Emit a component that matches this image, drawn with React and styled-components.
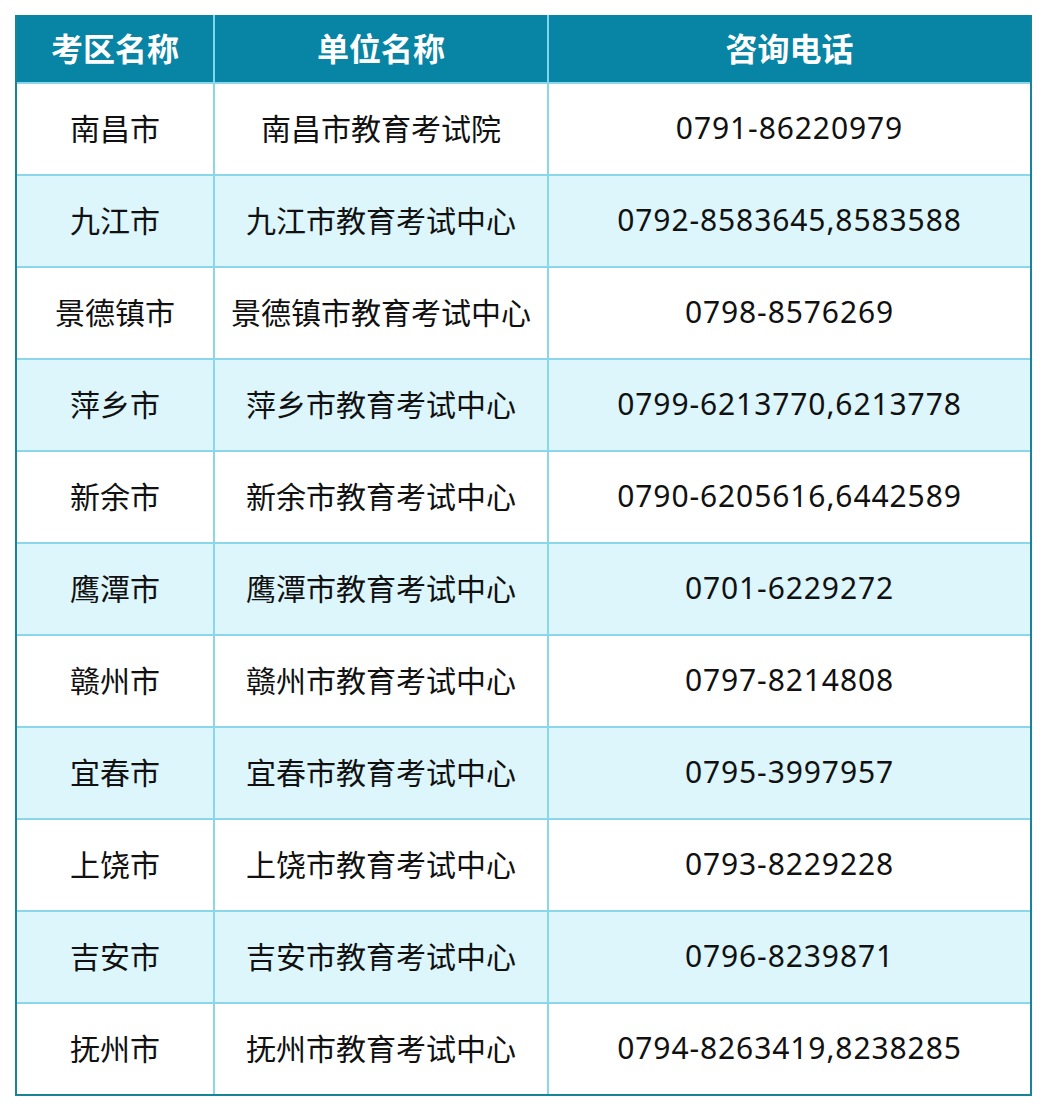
import styled, { createGlobalStyle } from 'styled-components'

const GlobalStyle = createGlobalStyle`
    body {
        margin: 0;
        background: #ffffff;
        font-family: "Noto Sans", "Noto Sans CJK SC", sans-serif;
    }
`

const rows = [
    ['南昌市', '南昌市教育考试院', '0791-86220979'],
    ['九江市', '九江市教育考试中心', '0792-8583645,8583588'],
    ['景德镇市', '景德镇市教育考试中心', '0798-8576269'],
    ['萍乡市', '萍乡市教育考试中心', '0799-6213770,6213778'],
    ['新余市', '新余市教育考试中心', '0790-6205616,6442589'],
    ['鹰潭市', '鹰潭市教育考试中心', '0701-6229272'],
    ['赣州市', '赣州市教育考试中心', '0797-8214808'],
    ['宜春市', '宜春市教育考试中心', '0795-3997957'],
    ['上饶市', '上饶市教育考试中心', '0793-8229228'],
    ['吉安市', '吉安市教育考试中心', '0796-8239871'],
    ['抚州市', '抚州市教育考试中心', '0794-8263419,8238285'],
]

function App() {
    return (
        <Page>
            <GlobalStyle />
            <Table>
                <HeadCell>考区名称</HeadCell>
                <HeadCell>单位名称</HeadCell>
                <HeadCell $last>咨询电话</HeadCell>
                {rows.map((row, i) => {
                    const isLast = i === rows.length - 1
                    const striped = i % 2 === 1
                    return row.map((text, j) => (
                        <Cell
                            key={i + '-' + j}
                            $striped={striped}
                            $lastCol={j === 2}
                            $lastRow={isLast}
                            $phone={j === 2}
                        >{text}</Cell>
                    ))
                })}
            </Table>
        </Page>
    )
}

const Page = styled.div`
    padding: 15px 0 0 15px;
`

const Table = styled.div`
    width: 1017px;
    box-sizing: border-box;
    display: grid;
    grid-template-columns: 198px 334px 481px;
    border-left: 2px solid #1a8497;
    border-right: 2px solid #1a8497;
    border-bottom: 2px solid #1a8497;
`

const HeadCell = styled.div`
    height: 69px;
    box-sizing: border-box;
    padding-bottom: 4px;
    display: flex;
    align-items: center;
    justify-content: center;
    background: #0884a5;
    color: #ffffff;
    font-family: "Noto Sans CJK SC", sans-serif;
    font-weight: 700;
    font-size: 32px;
    border-right: ${props => props.$last ? 'none' : '2px solid #7fd6ee'};
    border-bottom: 2px solid #8ad7ec;
`

const Cell = styled.div`
    height: ${props => props.$lastRow ? '90px' : '92px'};
    box-sizing: border-box;
    padding-bottom: ${props => props.$phone ? '2px' : '5px'};
    display: flex;
    align-items: center;
    justify-content: center;
    background: ${props => props.$striped ? '#ddf6fc' : '#ffffff'};
    color: #111111;
    font-family: ${props => props.$phone
        ? '"Noto Sans", "Noto Sans CJK SC", sans-serif'
        : '"Noto Sans CJK SC", sans-serif'};
    font-size: 30px;
    line-height: 1;
    letter-spacing: ${props => props.$phone ? '0.9px' : '0'};
    border-right: ${props => props.$lastCol ? 'none' : '2px solid #8ad7ec'};
    border-bottom: ${props => props.$lastRow ? 'none' : '2px solid #8ad7ec'};
`

export default App
